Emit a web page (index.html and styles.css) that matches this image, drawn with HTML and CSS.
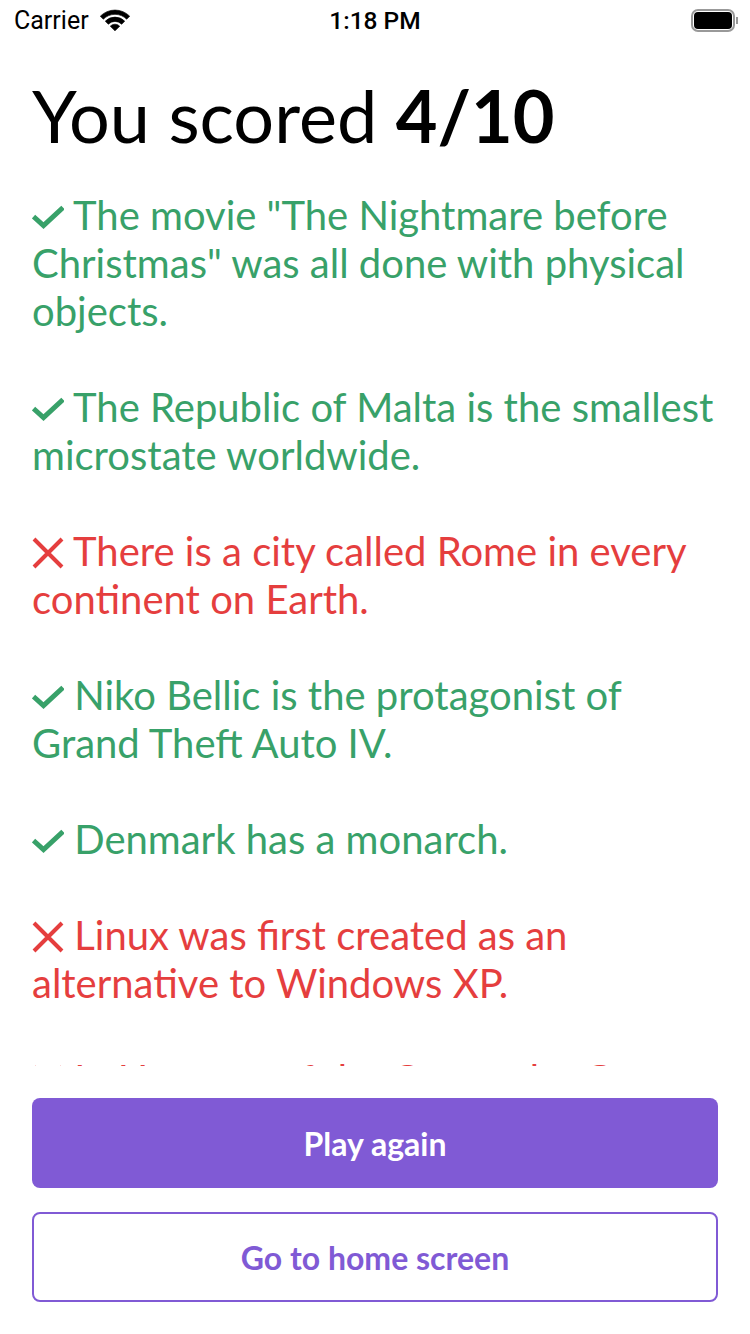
FILE: index.html
```html
<!DOCTYPE html>
<html lang="en">
<head>
  <meta charset="UTF-8">
  <meta name="viewport" content="width=device-width, initial-scale=1.0">
  <title>Results</title>
  <link rel="stylesheet" href="styles.css">
</head>
<body>
  <div class="status-bar">
    <div class="status-left">
      <span>Carrier</span>
      <svg class="wifi" viewBox="0 0 34 24">
        <path d="M1.4 7.4A22 22 0 0 1 32.6 7.4L29.4 10.6A17.5 17.5 0 0 0 4.6 10.6Z"/>
        <path d="M6.7 12.7A14.5 14.5 0 0 1 27.3 12.7L24.1 15.9A10 10 0 0 0 9.9 15.9Z"/>
        <path d="M12 18A7 7 0 0 1 22 18L17 23Z"/>
      </svg>
    </div>
    <span class="status-time">1:18 PM</span>
    <div class="battery-wrap">
      <div class="battery"><div class="battery-fill"></div></div>
      <div class="battery-nub"></div>
    </div>
  </div>

  <div class="content">
    <h1>You scored <b>4/10</b></h1>
    <div class="results">
      <p class="right"><svg class="mark" viewBox="0 0 32 24"><path d="M1.5 11.5L11.5 20.5L31 2.5"/></svg> The movie "The Nightmare before Christmas" was all done with physical objects.</p>
      <p class="right"><svg class="mark" viewBox="0 0 32 24"><path d="M1.5 11.5L11.5 20.5L31 2.5"/></svg> The Republic of Malta is the smallest microstate worldwide.</p>
      <p class="wrong"><svg class="mark" viewBox="0 0 32 32"><path d="M2 2L30 30M30 2L2 30"/></svg> There is a city called Rome in every continent on Earth.</p>
      <p class="right"><svg class="mark" viewBox="0 0 32 24"><path d="M1.5 11.5L11.5 20.5L31 2.5"/></svg> Niko Bellic is the protagonist of Grand Theft Auto IV.</p>
      <p class="right"><svg class="mark" viewBox="0 0 32 24"><path d="M1.5 11.5L11.5 20.5L31 2.5"/></svg> Denmark has a monarch.</p>
      <p class="wrong"><svg class="mark" viewBox="0 0 32 32"><path d="M2 2L30 30M30 2L2 30"/></svg> Linux was first created as an alternative to Windows XP.</p>
      <p class="wrong"><svg class="mark" viewBox="0 0 32 32"><path d="M2 2L30 30M30 2L2 30"/></svg> In Hungary of the Ocean the Great is</p>
    </div>
  </div>

  <div class="actions">
    <button class="btn btn-primary">Play again</button>
    <button class="btn btn-outline">Go to home screen</button>
  </div>
</body>
</html>
```

FILE: styles.css
```css
body {
  margin: 0;
  width: 750px;
  height: 1334px;
  overflow: hidden;
  display: flex;
  flex-direction: column;
  background: #fff;
  font-family: Lato, sans-serif;
  font-variant-ligatures: common-ligatures;
}
.status-bar {
  height: 40px;
  display: flex;
  align-items: center;
  justify-content: space-between;
  padding: 0 12px 0 14px;
  position: relative;
  font-family: Roboto, sans-serif;
  font-size: 25px;
  color: #000;
}
.status-left {
  display: flex;
  align-items: center;
  gap: 10px;
}
.wifi {
  width: 32px;
  height: 23px;
  fill: #000;
  stroke: #000;
  stroke-width: 0.7;
}
.status-time {
  position: absolute;
  left: 0;
  right: 0;
  text-align: center;
  font-size: 24.5px;
  font-weight: 500;
}
.battery-wrap {
  display: flex;
  align-items: center;
  gap: 1px;
}
.battery {
  width: 44px;
  height: 23px;
  box-sizing: border-box;
  border: 2px solid #999;
  border-radius: 7px;
  padding: 1px;
}
.battery-fill {
  height: 100%;
  background: #000;
  border-radius: 4px;
}
.battery-nub {
  width: 2px;
  height: 7px;
  background: #999;
}
.content {
  flex: 1;
  min-height: 0;
  display: flex;
  flex-direction: column;
  padding: 0 32px;
}
h1 {
  margin: 31px 0 0;
  font-size: 72px;
  line-height: 88px;
  font-weight: 400;
  color: #000;
}
h1 b {
  font-weight: 700;
}
.results {
  flex: 1;
  min-height: 0;
  overflow: hidden;
  margin-top: 32px;
  margin-bottom: 32px;
}
.results p {
  margin: 0 0 48px;
  font-size: 40px;
  line-height: 48px;
}
.right {
  color: #38a169;
}
.wrong {
  color: #e53e3e;
}
.mark {
  width: 32px;
  height: 24px;
  vertical-align: 1px;
  fill: none;
  stroke: currentColor;
  stroke-width: 5;
}
.wrong .mark {
  height: 32px;
  vertical-align: -3px;
  stroke-width: 4;
}
.actions {
  display: flex;
  flex-direction: column;
  gap: 24px;
  padding: 0 32px 32px;
}
.btn {
  height: 90px;
  border-radius: 8px;
  font-family: Lato, sans-serif;
  font-size: 32px;
  font-weight: 700;
  box-sizing: border-box;
}
.btn-primary {
  background: #805ad5;
  border: 0;
  color: #fff;
}
.btn-outline {
  background: #fff;
  border: 2px solid #805ad5;
  color: #805ad5;
}
```
